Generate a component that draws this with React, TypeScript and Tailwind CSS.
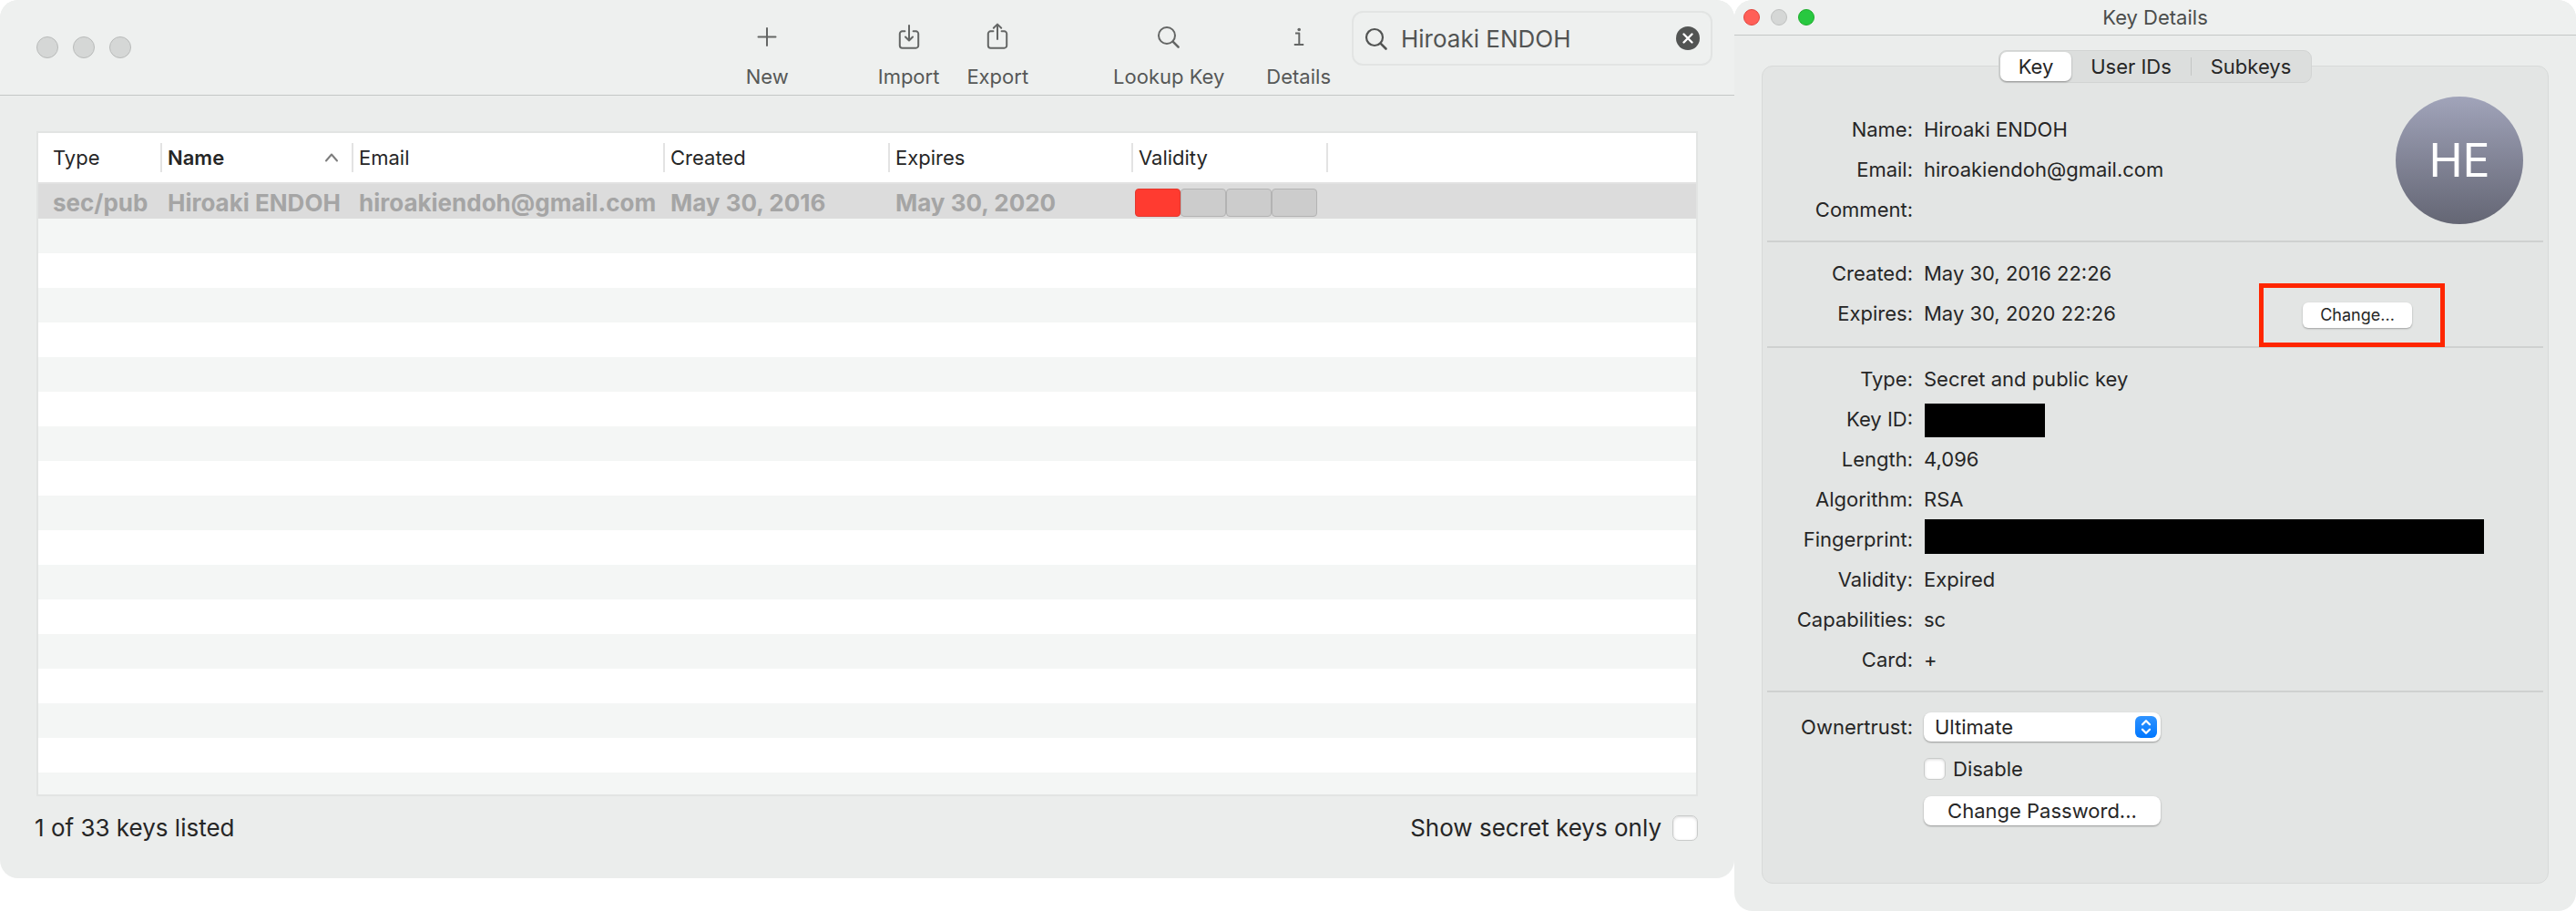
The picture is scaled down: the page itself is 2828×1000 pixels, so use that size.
import React, { useState } from "react";

const detailsIdentity = [
  { label: "Name:", value: "Hiroaki ENDOH" },
  { label: "Email:", value: "hiroakiendoh@gmail.com" },
  { label: "Comment:", value: "" },
];

const stripes = Array.from({ length: 17 }, (_, i) => i);

function IconBase({ children }: { children: React.ReactNode }) {
  return (
    <svg
      className="h-9 w-9 text-[#646665]"
      viewBox="0 0 36 36"
      fill="none"
      stroke="currentColor"
      strokeWidth="2"
      strokeLinecap="round"
      strokeLinejoin="round"
      aria-hidden="true"
    >
      {children}
    </svg>
  );
}

function PlusIcon() {
  return (
    <IconBase>
      <path d="M18 8v19M8.5 17.500h19" />
    </IconBase>
  );
}

function ImportIcon() {
  return (
    <IconBase>
      <path d="M13.400 11.300h-2.900a2.700 2.700 0 0 0-2.700 2.700v13a2.700 2.700 0 0 0 2.700 2.700h15a2.700 2.700 0 0 0 2.700-2.700V14a2.700 2.700 0 0 0-2.700-2.700h-2.900" />
      <path d="M18 5v16.300M14 17.500l4 4 4-4" />
    </IconBase>
  );
}

function ExportIcon() {
  return (
    <IconBase>
      <path d="M13.400 11.300h-2.900a2.700 2.700 0 0 0-2.700 2.700v13a2.700 2.700 0 0 0 2.700 2.700h15a2.700 2.700 0 0 0 2.700-2.700V14a2.700 2.700 0 0 0-2.700-2.700h-2.900" />
      <path d="M18 20V4M13.800 7.800l4.200-4.200 4.200 4.200" />
    </IconBase>
  );
}

function LookupIcon() {
  return (
    <IconBase>
      <circle cx="16" cy="16" r="9" />
      <path d="M22.600 22.600l6 6" strokeWidth="2.600" />
    </IconBase>
  );
}

function InfoIcon() {
  return (
    <IconBase>
      <path d="M14 13.500h4.300v12.500M12.800 26h10.400" strokeLinecap="butt" />
      <circle cx="18.200" cy="9.500" r="1.800" fill="currentColor" stroke="none" />
    </IconBase>
  );
}

function ToolButton({ label, icon }: { label: string; icon: React.ReactNode }) {
  return (
    <button type="button" className="flex flex-col items-center gap-[11px] text-[22px] leading-7 text-[#565857]">
      {icon}
      <span>{label}</span>
    </button>
  );
}

function HeaderCell({ label, sorted, first }: { label: string; sorted?: boolean; first?: boolean }) {
  return (
    <th scope="col" className="h-14 border-b-2 border-[#e2e2e2] p-0 text-left font-normal">
      <div
        className={`flex h-8 items-center justify-between border-r-2 border-[#e3e3e3] pr-3.5 ${
          first ? "pl-4" : "pl-1.5"
        } ${sorted ? "font-semibold" : ""}`}
      >
        <span>{label}</span>
        {sorted && (
          <svg className="h-2.5 w-4 text-[#7d7d7d]" viewBox="0 0 16 10" fill="none" stroke="currentColor" strokeWidth="2" strokeLinecap="round" strokeLinejoin="round" aria-hidden="true">
            <path d="M2 8.500l6-7 6 7" />
          </svg>
        )}
      </div>
    </th>
  );
}

function KeyListWindow() {
  const [query, setQuery] = useState("Hiroaki ENDOH");
  const cell = "h-[38px] p-0 pl-1.5 align-top leading-[42px]";
  return (
    <section className="self-start overflow-hidden rounded-[20px] bg-[#ebedec]">
      <header className="flex h-[105px] items-start border-b border-[#c4c7c6] bg-[#eef0ef] pr-6 pl-10">
        <div className="mt-10 flex gap-4">
          <span className="size-6 rounded-full border border-[#b9bbba] bg-[#d5d7d6]" />
          <span className="size-6 rounded-full border border-[#b9bbba] bg-[#d5d7d6]" />
          <span className="size-6 rounded-full border border-[#b9bbba] bg-[#d5d7d6]" />
        </div>
        <div className="mt-[23px] ml-auto flex">
          <div className="mr-[98px]">
            <ToolButton label="New" icon={<PlusIcon />} />
          </div>
          <div className="mr-[93px] flex gap-[30px]">
            <ToolButton label="Import" icon={<ImportIcon />} />
            <ToolButton label="Export" icon={<ExportIcon />} />
          </div>
          <div className="mr-[23px] flex gap-[46px]">
            <ToolButton label="Lookup Key" icon={<LookupIcon />} />
            <ToolButton label="Details" icon={<InfoIcon />} />
          </div>
        </div>
        <div className="mt-3 flex h-[60px] w-[396px] items-center rounded-xl border-2 border-[#e2e4e3] px-3 text-[#525453]">
          <svg className="size-7 shrink-0" viewBox="0 0 28 28" fill="none" stroke="currentColor" strokeWidth="2.200" strokeLinecap="round" aria-hidden="true">
            <circle cx="11" cy="13" r="9" />
            <path d="M17.600 19.600l5.900 5.900" strokeWidth="2.600" />
          </svg>
          <input
            aria-label="Search keys"
            value={query}
            onChange={(e) => setQuery(e.target.value)}
            className="ml-3 min-w-0 flex-1 bg-transparent pt-0.5 text-[26px] leading-8 outline-none"
          />
          <button type="button" aria-label="Clear search" onClick={() => setQuery("")}>
            <svg className="size-[26px]" viewBox="0 0 26 26" aria-hidden="true">
              <circle cx="13" cy="13" r="13" fill="#525453" />
              <path d="M8.500 8.500l9 9M17.500 8.500l-9 9" stroke="#fff" strokeWidth="2.400" strokeLinecap="round" />
            </svg>
          </button>
        </div>
      </header>

      <div className="mx-10 mt-[39px] border-2 border-[#e2e4e3] bg-white">
        <table className="w-full table-fixed border-separate border-spacing-0 text-[#262626]">
          <colgroup>
            <col className="w-[136px]" />
            <col className="w-[210px]" />
            <col className="w-[342px]" />
            <col className="w-[247px]" />
            <col className="w-[267px]" />
            <col className="w-[214px]" />
            <col />
          </colgroup>
          <thead>
            <tr className="text-[22px] leading-7">
              <HeaderCell label="Type" first />
              <HeaderCell label="Name" sorted />
              <HeaderCell label="Email" />
              <HeaderCell label="Created" />
              <HeaderCell label="Expires" />
              <HeaderCell label="Validity" />
              <td className="border-b-2 border-[#e2e2e2] p-0" />
            </tr>
          </thead>
          <tbody>
            <tr className="bg-[#dcdcdc] text-[26px] font-bold whitespace-nowrap text-[#a5a5a5]">
              <td className="h-[38px] p-0 pl-4 align-top leading-[42px]"><div className="h-[38px]">sec/pub</div></td>
              <td className={cell}><div className="h-[38px]">Hiroaki ENDOH</div></td>
              <td className={cell}><div className="h-[38px]">hiroakiendoh@gmail.com</div></td>
              <td className={cell}><div className="h-[38px]">May 30, 2016</div></td>
              <td className={cell}><div className="h-[38px]">May 30, 2020</div></td>
              <td className="h-[38px] p-0 align-top">
                <div className="mt-[5px] ml-0.5 grid h-[31px] w-[200px] grid-cols-4" role="meter" aria-label="Validity" aria-valuemin={0} aria-valuemax={4} aria-valuenow={1}>
                  <span className="rounded-[4px] border border-[#e2382e] bg-[#ff3b30]" />
                  <span className="rounded-[4px] border border-[#b3b3b3] bg-[#cccccc]" />
                  <span className="rounded-[4px] border border-[#b3b3b3] bg-[#cccccc]" />
                  <span className="rounded-[4px] border border-[#b3b3b3] bg-[#cccccc]" />
                </div>
              </td>
              <td />
            </tr>
            {stripes.map((i) => (
              <tr key={i} className="h-[38px] odd:bg-white even:bg-[#f4f6f5] last:h-6">
                <td colSpan={7} className="p-0" />
              </tr>
            ))}
          </tbody>
        </table>
      </div>

      <footer className="flex h-[90px] items-start justify-between pt-[17px] pr-10 pl-[38px] text-[26px] leading-9 text-[#262626]">
        <span>1 of 33 keys listed</span>
        <label className="flex items-center gap-3">
          Show secret keys only
          <CheckBox large />
        </label>
      </footer>
    </section>
  );
}

function CheckBox({ large }: { large?: boolean }) {
  return (
    <input
      type="checkbox"
      className={`appearance-none border border-[#c9cbca] bg-white shadow-[inset_0_1px_3px_rgba(0,0,0,0.150)] checked:bg-[#0a7aff] ${
        large ? "size-7 rounded-[7px]" : "size-6 rounded-[6px]"
      }`}
    />
  );
}

function Row({ label, children }: { label: string; children?: React.ReactNode }) {
  return (
    <div className="grid h-11 grid-cols-[165px_1fr] items-center gap-3">
      <dt className="text-right">{label}</dt>
      <dd className="flex items-center">{children}</dd>
    </div>
  );
}

function Separator() {
  return <hr className="mx-[5px] border-t-2 border-[#cfd1d0]" />;
}

function KeyDetailsWindow() {
  return (
    <section className="flex min-h-screen flex-col rounded-[20px] bg-[#ebedec] text-[22px] leading-7 text-[#262626]">
      <header className="grid h-[39px] grid-cols-[1fr_auto_1fr] items-center rounded-t-[20px] border-b border-[#c4c7c6] bg-[#eef0ef] px-2.5">
        <div className="flex gap-3">
          <button type="button" aria-label="Close" className="size-[18px] rounded-full border border-[#e2463f] bg-[#ff5f57]" />
          <button type="button" aria-label="Minimize" disabled className="size-[18px] rounded-full border border-[#bfc1c0] bg-[#d5d7d6]" />
          <button type="button" aria-label="Zoom" className="size-[18px] rounded-full border border-[#1dad2b] bg-[#28c840]" />
        </div>
        <h1 className="text-[#4b4d4c]">Key Details</h1>
      </header>

      <div className="mx-[30px] mt-[33px] mb-[30px] flex flex-1 flex-col rounded-xl border border-[#d8dad9] bg-[#e3e5e4]">
        <div role="tablist" className="-mt-[18px] flex h-9 items-center self-center rounded-[9px] border border-[#d2d4d3] bg-[#dcdedd] p-px">
          <button type="button" role="tab" aria-selected="true" className="h-8 w-[78px] rounded-[7px] bg-white shadow-[0_1px_2px_rgba(0,0,0,0.350)]">
            Key
          </button>
          <button type="button" role="tab" aria-selected="false" className="h-8 w-[131px]">
            User IDs
          </button>
          <span className="h-5 w-px bg-[#c4c6c5]" />
          <button type="button" role="tab" aria-selected="false" className="h-8 w-[130px]">
            Subkeys
          </button>
        </div>

        <div className="flex items-start justify-between pt-[15px] pr-[27px] pb-3">
          <dl className="mt-[14px]">
            {detailsIdentity.map((d) => (
              <Row key={d.label} label={d.label}>{d.value}</Row>
            ))}
          </dl>
          <div className="flex size-[140px] items-center justify-center rounded-full bg-linear-to-b from-[#a1a4ba] to-[#646674] text-[50px] leading-none text-white">
            HE
          </div>
        </div>
        <Separator />
        <div className="relative">
          <dl className="pt-3 pb-[14px]">
            <Row label="Created:">May 30, 2016 22:26</Row>
            <Row label="Expires:">May 30, 2020 22:26</Row>
          </dl>
          <div className="absolute right-[113px] -bottom-px flex h-[70px] w-[204px] items-center justify-center border-[5px] border-[#ff2600] pl-3">
            <button type="button" className="h-7 w-[120px] rounded-[6px] bg-white text-[18px] shadow-[0_1px_2px_rgba(0,0,0,0.300)]">
              Change...
            </button>
          </div>
        </div>
        <Separator />
        <dl className="py-3">
          <Row label="Type:">Secret and public key</Row>
          <Row label="Key ID:"><span className="mt-[3px] ml-px h-[37px] w-[132px] bg-black" /></Row>
          <Row label="Length:">4,096</Row>
          <Row label="Algorithm:">RSA</Row>
          <Row label="Fingerprint:"><span className="mr-[70px] mb-1.5 ml-px h-[38px] flex-1 bg-black" /></Row>
          <Row label="Validity:">Expired</Row>
          <Row label="Capabilities:">sc</Row>
          <Row label="Card:">+</Row>
        </dl>
        <Separator />
        <div className="grid grid-cols-[165px_260px] items-center gap-x-3 gap-y-[18px] pt-[22px]">
          <label htmlFor="ownertrust" className="text-right">Ownertrust:</label>
          <div className="relative">
            <select id="ownertrust" defaultValue="Ultimate" className="block h-8 w-full appearance-none rounded-[8px] bg-white pl-3 shadow-[0_1px_2px_rgba(0,0,0,0.350)]">
              <option>Ultimate</option>
              <option>Full</option>
              <option>Marginal</option>
              <option>Never</option>
            </select>
            <svg className="pointer-events-none absolute top-1 right-1 size-6" viewBox="0 0 24 24" fill="none" aria-hidden="true">
              <defs>
                <linearGradient id="stepper" x1="0" y1="0" x2="0" y2="1">
                  <stop offset="0" stopColor="#2f93ff" />
                  <stop offset="1" stopColor="#0077ff" />
                </linearGradient>
              </defs>
              <rect width="24" height="24" rx="6" fill="url(#stepper)" />
              <path d="M8 9.200l4-4 4 4M8 14.800l4 4 4-4" stroke="#fff" strokeWidth="2.300" strokeLinecap="round" strokeLinejoin="round" />
            </svg>
          </div>
          <label className="col-start-2 flex h-6 items-center gap-2">
            <CheckBox />
            Disable
          </label>
          <button type="button" className="col-start-2 h-8 rounded-[8px] bg-white shadow-[0_1px_2px_rgba(0,0,0,0.350)]">
            Change Password...
          </button>
        </div>
      </div>
    </section>
  );
}

export default function App() {
  return (
    <main className="grid grid-cols-[1904fr_924fr] bg-white font-['Inter','Liberation_Sans',sans-serif]">
      <KeyListWindow />
      <KeyDetailsWindow />
    </main>
  );
}
